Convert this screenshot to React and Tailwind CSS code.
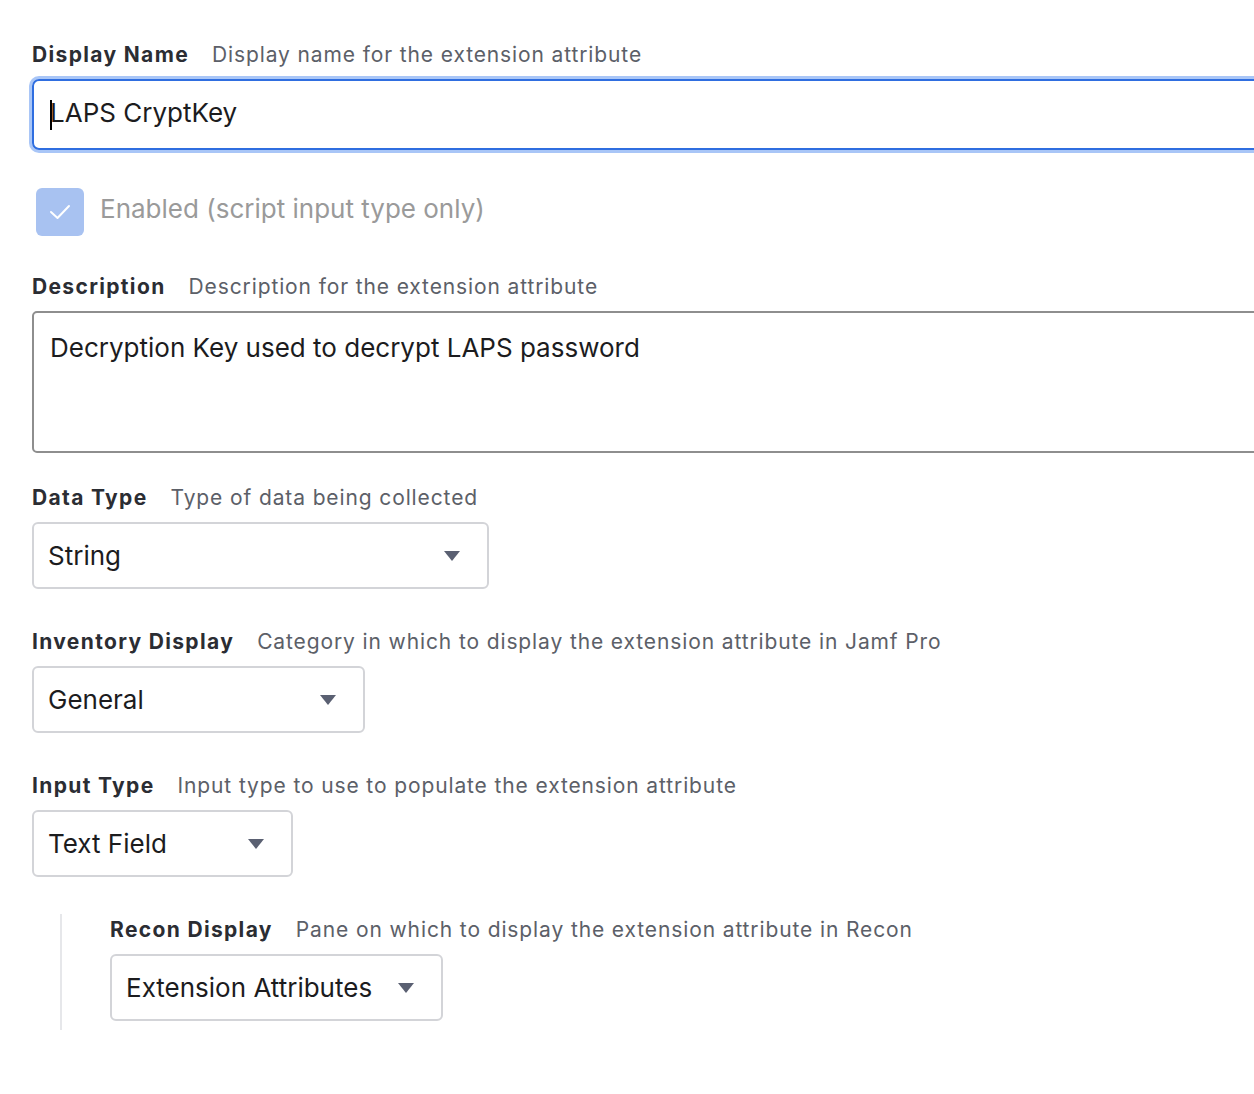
import React from "react";

const font = { fontFamily: "Inter, 'Open Sans', sans-serif" };

function Label({ title, hint }) {
  return (
    <div className="flex items-center h-[30px] pt-[1px] mb-[10px] whitespace-nowrap">
      <span className="text-[21px] font-bold text-[#2b2d33] tracking-[0.064em]">{title}</span>
      <span className="ml-[23px] text-[21px] text-[#5c6068] tracking-[0.042em]">{hint}</span>
    </div>
  );
}

function Caret() {
  return (
    <svg width="16" height="10" viewBox="0 0 16 10" className="shrink-0">
      <path d="M0 0 L16 0 L8 10 Z" fill="#5a6072" />
    </svg>
  );
}

function Select({ value, width }) {
  return (
    <div
      className={`${width} h-[67px] flex items-center justify-between pl-[14px] pr-[27px] border-2 border-[#d3d4d8] rounded-[6px] bg-white`}
    >
      <span className="text-[26px] text-[#1c1c1e] mb-[1px]">{value}</span>
      <Caret />
    </div>
  );
}

export default function App() {
  return (
    <div className="w-[1254px] h-[1094px] overflow-hidden bg-white pl-[32px] pt-[39px]" style={font}>
      <Label title="Display Name" hint="Display name for the extension attribute" />
      <div className="w-[1300px] h-[71px] flex items-center pl-[16px] border-2 border-[#2f6ee0] rounded-[7px] shadow-[0_0_0_3px_#a9c6f7]">
        <span className="w-[2px] h-[30px] bg-black mr-[-2px]" />
        <span className="text-[26px] text-[#1c1c1e] mb-[5px]">LAPS CryptKey</span>
      </div>

      <div className="flex items-center mt-[38px] ml-[4px]">
        <div className="w-[48px] h-[48px] rounded-[6px] bg-[#a8c2f1] flex items-center justify-center">
          <svg width="24" height="18" viewBox="0 0 24 18">
            <path d="M3 9 L9.5 15 L21 3" stroke="white" strokeWidth="2" fill="none" strokeLinecap="round" strokeLinejoin="round" />
          </svg>
        </div>
        <span className="ml-[16px] text-[26px] text-[#9a9a9a] mb-[8px]">Enabled (script input type only)</span>
      </div>

      <div className="mt-[35px]">
        <Label title="Description" hint="Description for the extension attribute" />
      </div>
      <div className="w-[1300px] h-[142px] border-2 border-[#8e8e8e] rounded-[5px] pl-[16px] pt-[15px]">
        <span className="text-[26px] text-[#1c1c1e]">Decryption Key used to decrypt LAPS password</span>
      </div>

      <div className="mt-[29px]">
        <Label title="Data Type" hint="Type of data being collected" />
      </div>
      <Select value="String" width="w-[457px]" />

      <div className="mt-[37px]">
        <Label title="Inventory Display" hint="Category in which to display the extension attribute in Jamf Pro" />
      </div>
      <Select value="General" width="w-[333px]" />

      <div className="mt-[37px]">
        <Label title="Input Type" hint="Input type to use to populate the extension attribute" />
      </div>
      <Select value="Text Field" width="w-[261px]" />

      <div className="mt-[37px] ml-[28px] border-l-2 border-[#e6e7ea] pl-[48px] pb-[9px]">
        <Label title="Recon Display" hint="Pane on which to display the extension attribute in Recon" />
        <Select value="Extension Attributes" width="w-[333px]" />
      </div>
    </div>
  );
}
